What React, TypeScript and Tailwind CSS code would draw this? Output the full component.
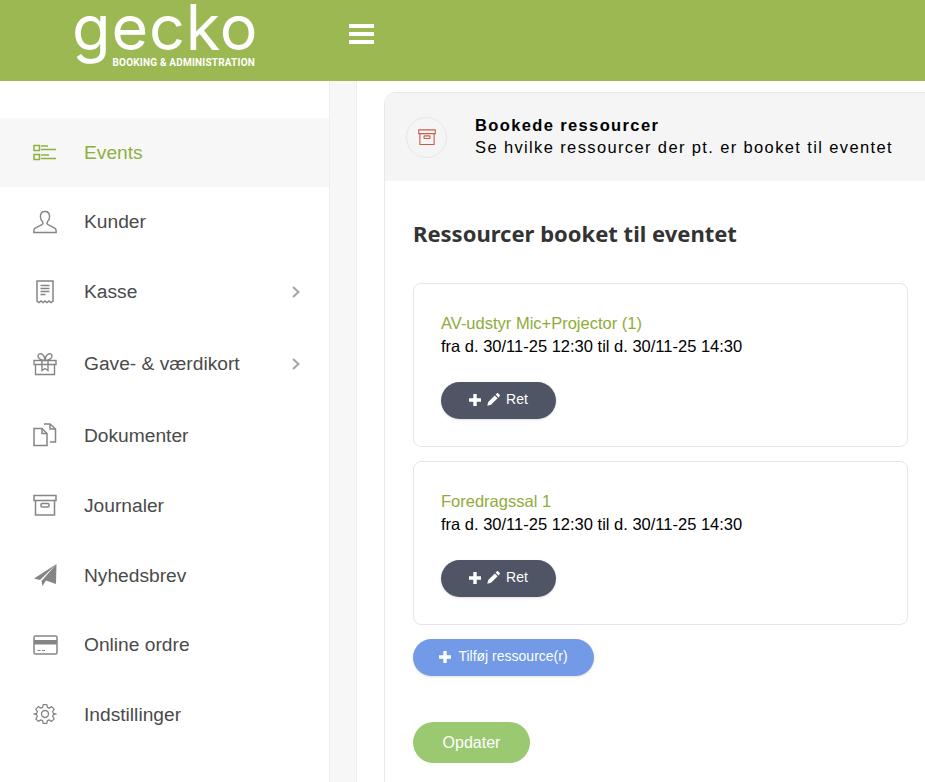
import React from "react";

const stroke = "#858585";

function IconEvents() {
  return (
    <svg width="24" height="18" viewBox="0 0 24 18" fill="none" stroke="#8fb03e" strokeWidth="1.500">
      <rect x="1" y="1.500" width="5.500" height="5" />
      <rect x="1" y="10.500" width="5.500" height="5" />
      <path d="M8 2h7M8 5.500h15M8 11h8M8 14.500h15" />
    </svg>
  );
}
function IconUser() {
  return (
    <svg width="24" height="24" viewBox="0 0 24 24" fill="none" stroke={stroke} strokeWidth="1.400">
      <path d="M12 1.500c-3 0-4.600 2.200-4.600 5 0 2.200.9 4.200 2.200 5.300.5.900.3 2.200-.7 2.800L1.800 18.300c-.8.500-1 1.700-1 4.200h22.400c0-2.500-.2-3.700-1-4.200l-7.100-3.700c-1-.6-1.200-1.900-.7-2.800 1.300-1.100 2.200-3.100 2.200-5.300 0-2.800-1.600-5-4.600-5z" />
    </svg>
  );
}
function IconReceipt() {
  return (
    <svg width="24" height="24" viewBox="0 0 24 24" fill="none" stroke={stroke} strokeWidth="1.500">
      <path d="M4 1h16v20l-2 1.500-2-1.500-2 1.500-2-1.500-2 1.500-2-1.500-2 1.500L4 21z" />
      <path d="M7.500 5.500h9M7.500 8.500h9M7.500 11.500h9M7.500 14.500h5" />
    </svg>
  );
}
function IconGift() {
  return (
    <svg width="24" height="24" viewBox="0 0 24 24" fill="none" stroke={stroke} strokeWidth="1.400">
      <path d="M1 8.500h22v4H1zM2.500 12.500v10h19v-10" />
      <path d="M12 8.500C8 8.500 5 6.500 5 4c0-2 2.500-3 4.500-1.500C11 3.700 12 6 12 8.500zM12 8.500c4 0 7-2 7-4.500 0-2-2.500-3-4.500-1.500C13 3.700 12 6 12 8.500z" />
      <path d="M9 8.500v10l3-2 3 2v-10" />
    </svg>
  );
}
function IconDocs() {
  return (
    <svg width="24" height="24" viewBox="0 0 24 24" fill="none" stroke={stroke} strokeWidth="1.500">
      <path d="M1 5.500h8l5 5v12H1z" />
      <path d="M9 5.500v5h5" />
      <path d="M11 1h6l5.500 5v13H17" />
      <path d="M17 1v5h5.500" />
    </svg>
  );
}
function IconBox({ color = stroke, size = 24 }: { color?: string; size?: number }) {
  return (
    <svg width={size} height={size} viewBox="0 0 24 24" fill="none" stroke={color} strokeWidth="1.500">
      <path d="M1 2.500h22v5H1zM2.500 7.500V22h19V7.500" />
      <rect x="8" y="10.500" width="8" height="3.500" rx="1" />
    </svg>
  );
}
function IconSend() {
  return (
    <svg width="24" height="24" viewBox="0 0 24 24" fill="#858585">
      <path d="M23.500 1L1 15.500l6 1.500L23.500 1zM23.500 1L8.500 18l1 5 3.500-5.500 10 3.500z" />
    </svg>
  );
}
function IconCard() {
  return (
    <svg width="25" height="20" viewBox="0 0 25 20" fill="none" stroke={stroke}>
      <rect x="1" y="1" width="23" height="18" rx="1.500" strokeWidth="1.500" />
      <rect x="1" y="5" width="23" height="4.500" fill={stroke} stroke="none" />
      <path d="M4.500 15.500h3M9 15.500h3" strokeWidth="1.200" />
    </svg>
  );
}
function IconGear() {
  return (
    <svg width="24" height="24" viewBox="0 0 24 24" fill="none" stroke={stroke} strokeWidth="1.400" strokeLinejoin="round">
      <path d="M10 1.500h4l.7 3.200 1.900.8 2.800-1.700 2.800 2.800-1.700 2.800.8 1.900 3.200.7v0l-3.200.7-.8 1.900 1.700 2.800-2.800 2.800-2.800-1.700-1.900.8-.7 3.200h-4l-.7-3.200-1.900-.8-2.800 1.700-2.800-2.800 1.700-2.800-.8-1.900-3.200-.7v0l3.200-.7.8-1.900-1.700-2.800 2.800-2.800 2.800 1.700 1.900-.8z" transform="translate(1.200 1.200) scale(.9)" />
      <circle cx="12" cy="12" r="3.500" />
    </svg>
  );
}
function Chevron() {
  return (
    <svg width="10" height="14" viewBox="0 0 10 14" fill="none" stroke="#a2a6ab" strokeWidth="2">
      <path d="M2 2l5.500 5L2 12" />
    </svg>
  );
}
function Plus() {
  return (
    <svg width="12" height="12" viewBox="0 0 12 12" fill="#fff">
      <path d="M4.300 0h3.400v4.300H12v3.400H7.700V12H4.300V7.700H0V4.300h4.300z" />
    </svg>
  );
}
function Pencil() {
  return (
    <svg width="13" height="13" viewBox="0 0 13 13" fill="#fff">
      <path d="M9.800.4c.4-.4 1-.4 1.400 0l1.400 1.400c.4.4.4 1 0 1.400l-1.200 1.200-2.800-2.800zM7.800 2.400l2.800 2.800L4 11.800.3 12.700l.9-3.700z" />
    </svg>
  );
}

function NavRow({ h, icon, label, active, chevron }: { h: string; icon: React.ReactNode; label: string; active?: boolean; chevron?: boolean }) {
  return (
    <div className={`flex items-center pl-[33px] pr-[28px] ${h} ${active ? "bg-[#f7f7f7]" : ""}`}>
      <div className="w-[51px] flex items-center">{icon}</div>
      <span className={`flex-1 text-[19.2px] pt-[2px] ${active ? "text-[#8fb03e]" : "text-[#4a4a4a]"}`}>{label}</span>
      {chevron && <Chevron />}
    </div>
  );
}

function ResourceCard({ title }: { title: string }) {
  return (
    <div className="h-[164px] border border-[#e6e6e6] rounded-[8px] pl-[27px] pt-[28px]">
      <div className="text-[16.5px] leading-[23px] text-[#8fab3a]">{title}</div>
      <div className="text-[16.5px] leading-[23px] text-black">fra d. 30/11-25 12:30 til d. 30/11-25 14:30</div>
      <div className="mt-[24px] w-[115px] h-[37px] rounded-full bg-[#505566] text-white text-[14px] flex items-center justify-center gap-[6px] shadow-sm pb-[2px]">
        <Plus />
        <Pencil />
        <span>Ret</span>
      </div>
    </div>
  );
}

export default function App() {
  return (
    <div className="w-[925px] h-[782px] overflow-hidden bg-white font-['Liberation_Sans',Arial,sans-serif] flex flex-col">
      <header className="h-[81px] bg-[#9cb852] flex items-start shrink-0">
        <div className="ml-[72px] w-[184px] h-[81px] relative">
          <div className="font-['Inter',sans-serif] font-normal text-white text-[63px] leading-[54px] tracking-[0.8px] whitespace-nowrap">gecko</div>
          <div className="absolute right-[1px] top-[57px] font-['Roboto',sans-serif] font-bold text-white text-[10px] leading-[11px] whitespace-nowrap tracking-[0.2px]">BOOKING &amp; ADMINISTRATION</div>
        </div>
        <div className="ml-[93px] mt-[24px] w-[25px] flex flex-col gap-[4px]">
          <div className="h-[4px] bg-white" />
          <div className="h-[4px] bg-white" />
          <div className="h-[4px] bg-white" />
        </div>
      </header>
      <div className="flex flex-1 min-h-0">
        <aside className="w-[330px] shrink-0 pt-[37px] border-r border-[#eeeeee] box-border">
          <NavRow h="h-[69px]" icon={<IconEvents />} label="Events" active />
          <NavRow h="h-[69px]" icon={<IconUser />} label="Kunder" />
          <NavRow h="h-[71px]" icon={<IconReceipt />} label="Kasse" chevron />
          <NavRow h="h-[73px]" icon={<IconGift />} label="Gave- & værdikort" chevron />
          <NavRow h="h-[70px]" icon={<IconDocs />} label="Dokumenter" />
          <NavRow h="h-[70px]" icon={<IconBox />} label="Journaler" />
          <NavRow h="h-[70px]" icon={<IconSend />} label="Nyhedsbrev" />
          <NavRow h="h-[69px]" icon={<IconCard />} label="Online ordre" />
          <NavRow h="h-[70px]" icon={<IconGear />} label="Indstillinger" />
        </aside>
        <div className="w-[27px] shrink-0 bg-[#f7f7f7] border-r border-[#eeeeee]" />
        <main className="flex-1 min-w-0 pl-[27px] pt-[11px] overflow-hidden">
          <section className="w-[600px] h-[720px] border border-[#e8e8e8] rounded-tl-[12px] overflow-hidden">
            <div className="h-[88px] bg-[#f5f5f5] flex items-center pl-[21px]">
              <div className="w-[41px] h-[41px] rounded-full border border-[#e6e6e6] flex items-center justify-center">
                <IconBox color="#c4604a" size={18} />
              </div>
              <div className="ml-[28px] pb-[2px] text-[16.5px] leading-[22px] text-black tracking-[1.37px] whitespace-nowrap">
                <div className="font-bold">Bookede ressourcer</div>
                <div>Se hvilke ressourcer der pt. er booket til eventet</div>
              </div>
            </div>
            <div className="pl-[28px] pr-[76px]">
              <h2 className="mt-[36px] font-['Noto_Sans',sans-serif] font-bold text-[22px] leading-[32px] text-[#333333] whitespace-nowrap">Ressourcer booket til eventet</h2>
              <div className="mt-[34px] flex flex-col gap-[14px] w-[495px]">
                <ResourceCard title="AV-udstyr Mic+Projector (1)" />
                <ResourceCard title="Foredragssal 1" />
              </div>
              <div className="mt-[14px] w-[181px] h-[37px] rounded-full bg-[#739ae6] text-white text-[14px] flex items-center justify-center gap-[7px] shadow-sm pb-[2px]">
                <Plus />
                <span>Tilføj ressource(r)</span>
              </div>
              <div className="mt-[46px] w-[117px] h-[41px] rounded-full bg-[#9bc972] text-white text-[16px] flex items-center justify-center">Opdater</div>
            </div>
          </section>
        </main>
      </div>
    </div>
  );
}
